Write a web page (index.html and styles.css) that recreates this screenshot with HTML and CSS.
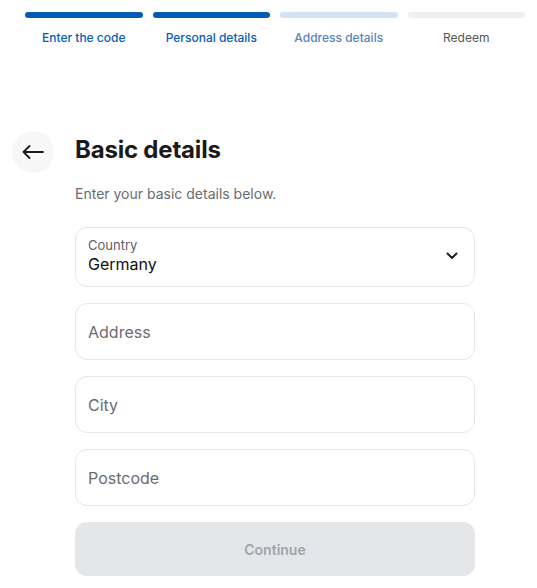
FILE: index.html
```html
<!DOCTYPE html>
<html lang="en">
<head>
<meta charset="utf-8">
<title>Basic details</title>
<link rel="stylesheet" href="styles.css">
</head>
<body>
<nav class="stepper">
  <div class="step done"><span class="bar"></span><span class="label">Enter the code</span></div>
  <div class="step done"><span class="bar"></span><span class="label">Personal details</span></div>
  <div class="step current"><span class="bar"></span><span class="label">Address details</span></div>
  <div class="step todo"><span class="bar"></span><span class="label">Redeem</span></div>
</nav>
<main class="layout">
  <div class="side">
    <button class="back" aria-label="Back">
      <svg width="22" height="14" viewBox="0 0 22 14" fill="none" stroke="#1a1a1a" stroke-width="1.8" stroke-linecap="round" stroke-linejoin="round"><path d="M21 7H1.5M7.5 1L1.5 7l6 6"/></svg>
    </button>
  </div>
  <div class="content">
    <h1 class="title">Basic details</h1>
    <p class="subtitle">Enter your basic details below.</p>
    <form class="form">
      <div class="field select">
        <div class="select-text">
          <span class="select-label">Country</span>
          <span class="select-value">Germany</span>
        </div>
        <svg class="chevron" width="12" height="8" viewBox="0 0 12 8" fill="none" stroke="#222" stroke-width="2" stroke-linecap="round" stroke-linejoin="round"><path d="M1.5 1.5L6 6l4.5-4.5"/></svg>
      </div>
      <div class="field"><span class="placeholder">Address</span></div>
      <div class="field"><span class="placeholder">City</span></div>
      <div class="field"><span class="placeholder">Postcode</span></div>
      <button type="button" class="continue" disabled>Continue</button>
    </form>
  </div>
</main>
</body>
</html>
```
FILE: styles.css
```css
* { box-sizing: border-box; }
html, body { margin: 0; padding: 0; background: #fff; }
body {
  font-family: Inter, "Noto Sans", sans-serif;
  color: #1a1a1a;
  width: 537px;
}
.stepper {
  display: grid;
  grid-template-columns: repeat(4, 1fr);
  column-gap: 10px;
  padding: 12px 12px 0 25px;
}
.step { display: flex; flex-direction: column; align-items: center; }
.bar { display: block; width: 100%; height: 6px; border-radius: 3px; }
.label { margin-top: 12px; font-size: 12px; font-weight: 500; line-height: 15px; }
.done .bar { background: #075cb8; }
.done .label { color: #075cb8; }
.current .bar { background: #d4e3f4; }
.current .label { color: #5a82b8; }
.todo .bar { background: #efeff0; }
.todo .label { color: #555; font-weight: 400; }

.layout {
  display: flex;
  margin-top: 86px;
}
.side { width: 75px; padding-left: 12px; }
.back {
  width: 42px; height: 42px; border-radius: 50%;
  border: none; background: #f7f7f7;
  display: flex; align-items: center; justify-content: center;
  padding: 0; cursor: pointer;
}
.content { width: 400px; }
.title {
  margin: 0; font-size: 24px; font-weight: 700; line-height: 38px;
  color: #1a1a1a; letter-spacing: -0.2px;
}
.subtitle {
  margin: 15px 0 0; font-size: 14px; line-height: 20px; color: #6b6b72;
}
.form {
  display: flex; flex-direction: column; gap: 16px;
  margin-top: 23px;
}
.field {
  border: 1px solid #e6e6e8;
  border-radius: 12px;
  height: 57px;
  padding: 0 12px;
  display: flex; align-items: center;
}
.field.select { height: 60px; justify-content: space-between; padding-right: 16px; }
.select-text { display: flex; flex-direction: column; padding-bottom: 2px; }
.select-label { font-size: 13px; color: #606066; line-height: 16px; }
.select-value { font-size: 16px; color: #111; line-height: 22px; margin-top: 0; }
.chevron { margin-bottom: 2px; }
.placeholder { font-size: 16px; color: #6b6b72; }
.continue {
  height: 54px; border: none; border-radius: 12px;
  background: #e5e6ea; color: #a2a4ab;
  font-family: inherit; font-size: 14px; font-weight: 600;
}
```
